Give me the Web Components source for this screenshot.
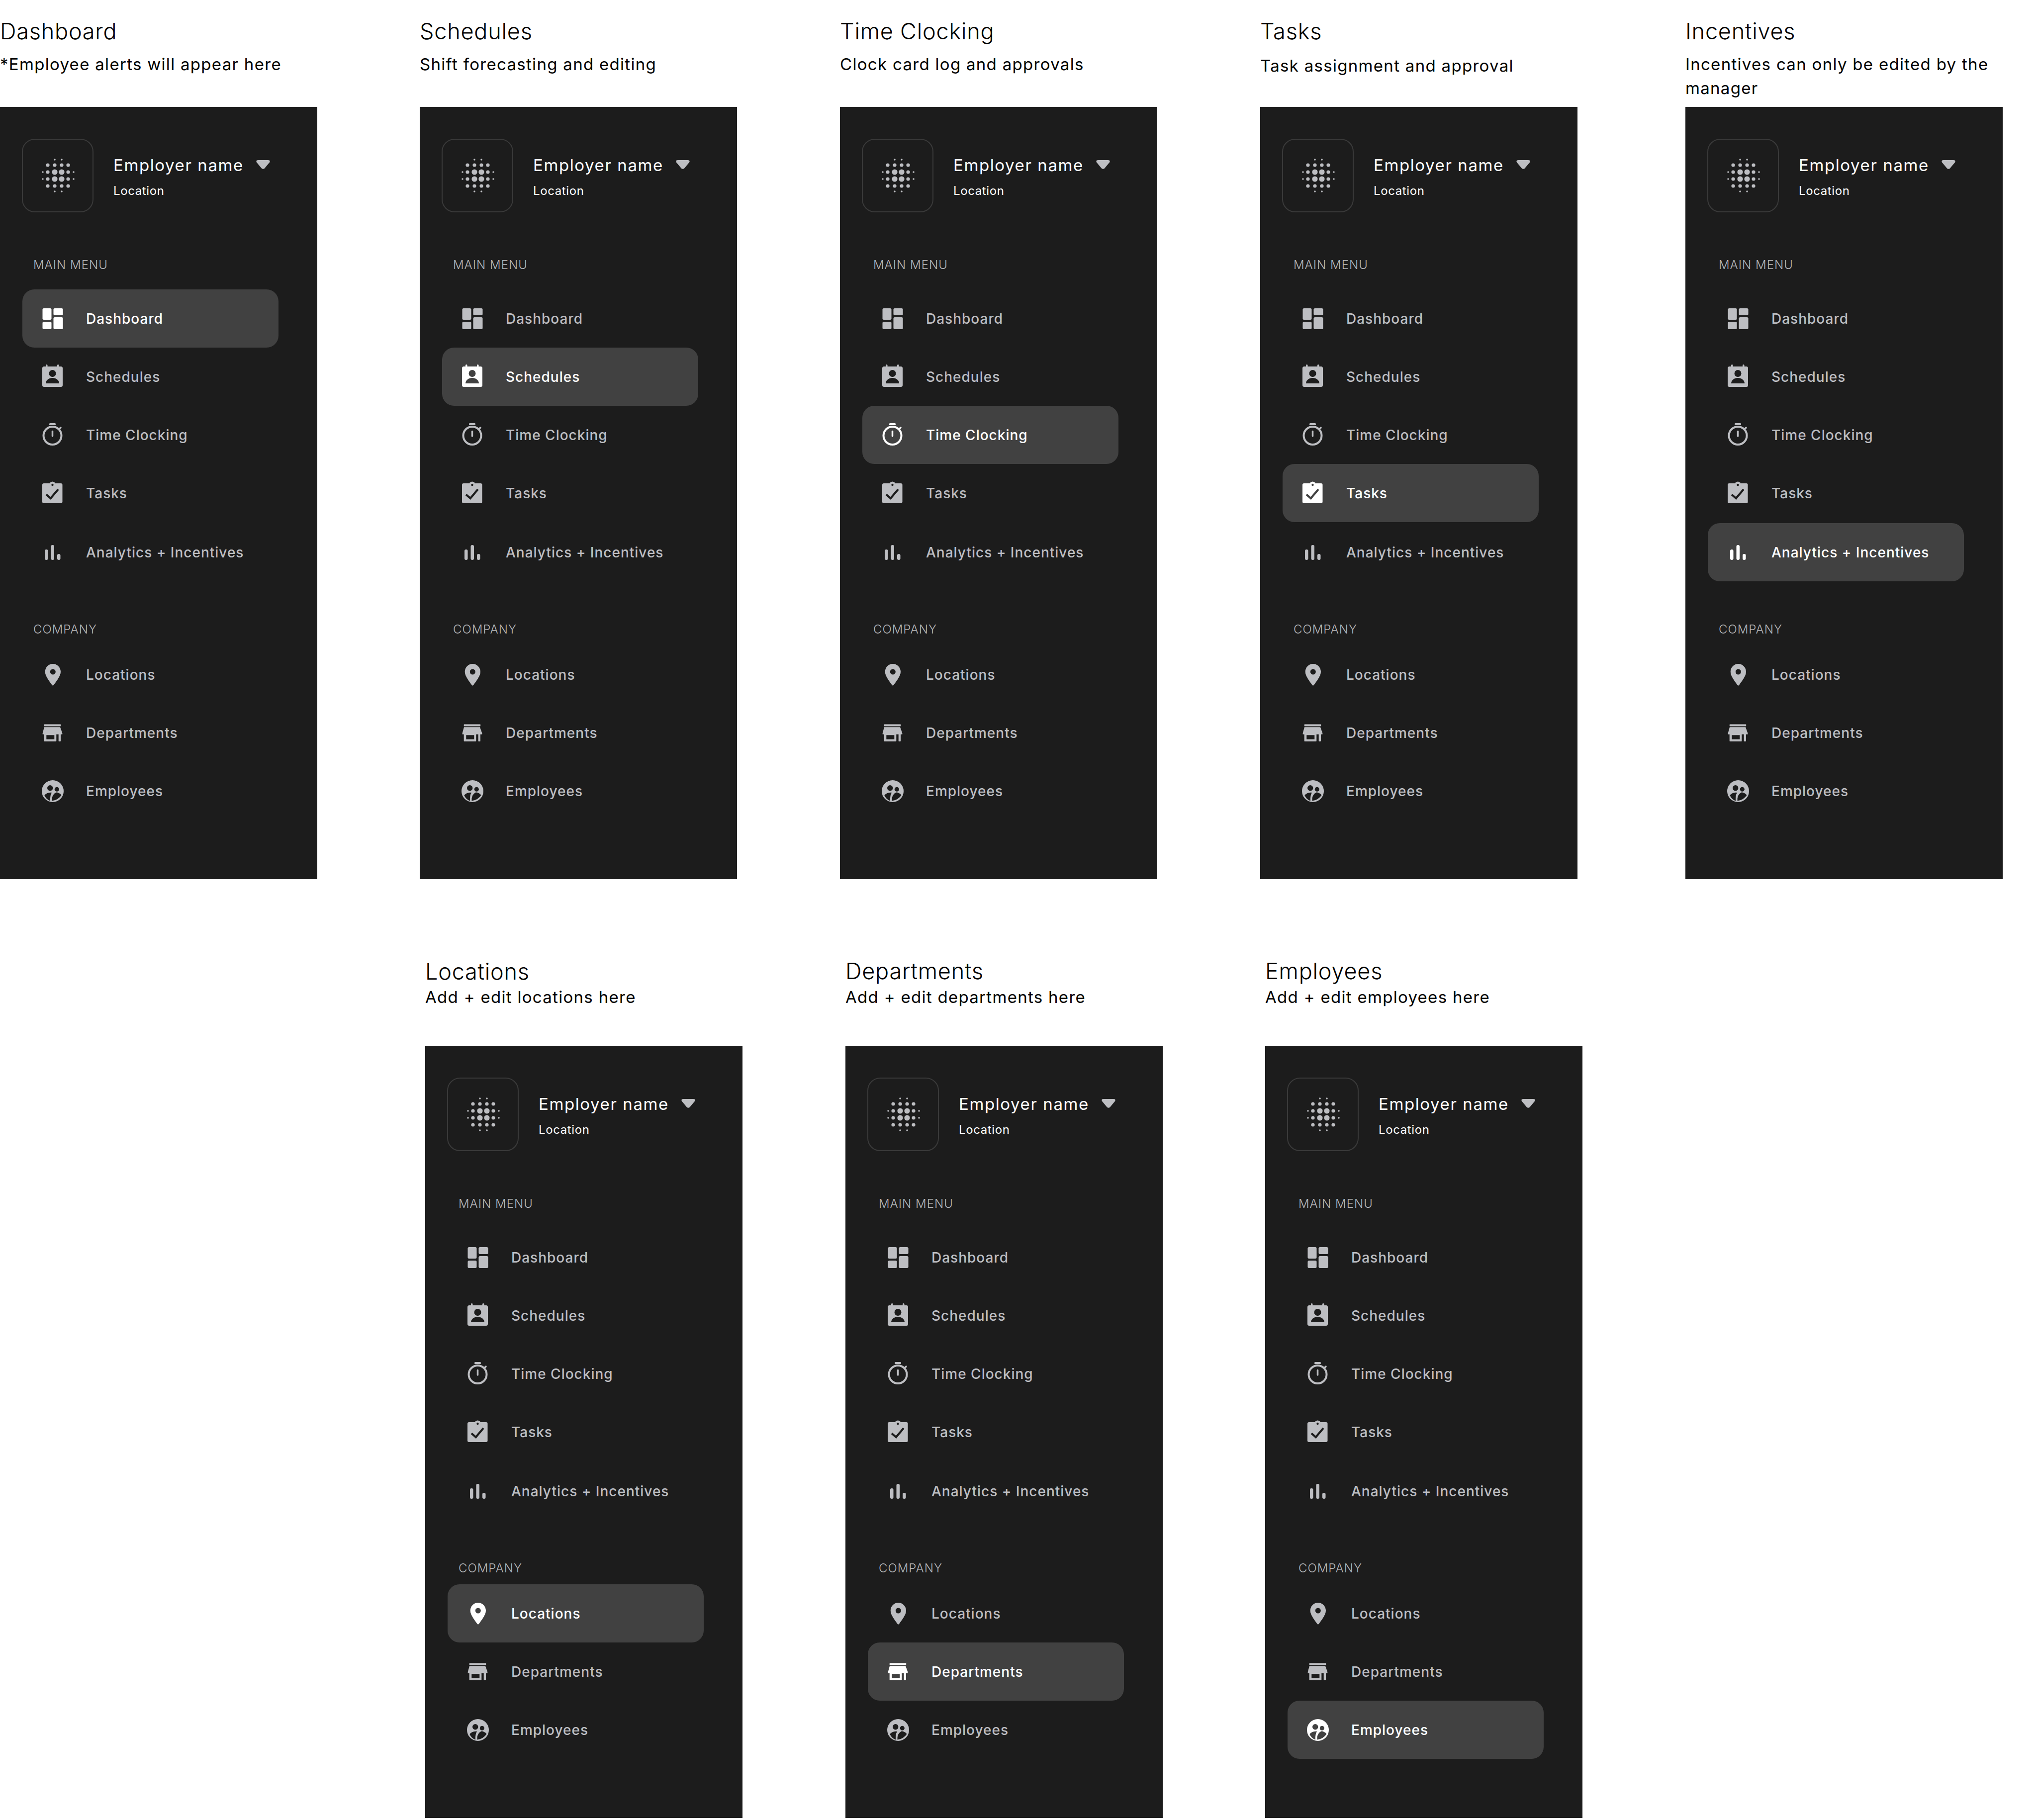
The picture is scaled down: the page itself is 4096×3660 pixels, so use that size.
<!DOCTYPE html>
<html>
<head>
<meta charset="utf-8">
<title>Employer menu states</title>
<style>
    html, body { margin: 0; background: #fff; }
    body { font-family: Inter, "Liberation Sans", sans-serif; }
</style>
</head>
<body>
<screen-row columns="844px 845px 845px 855px 638px">
    <menu-screen heading="Dashboard" note="*Employee alerts will appear here" active="Dashboard"></menu-screen>
    <menu-screen heading="Schedules" note="Shift forecasting and editing" active="Schedules"></menu-screen>
    <menu-screen heading="Time Clocking" note="Clock card log and approvals" active="Time Clocking"></menu-screen>
    <menu-screen heading="Tasks" note="Task assignment and approval" active="Tasks" style="--note-gap: 18px"></menu-screen>
    <menu-screen heading="Incentives" note="Incentives can only be edited by the manager" active="Analytics + Incentives"></menu-screen>
</screen-row>
<screen-row columns="845px 844px 638px" style="--row-gap: 120px; --row-indent: 855px; --title-top: 39px; --note-gap: 0px">
    <menu-screen heading="Locations" note="Add + edit locations here" active="Locations"></menu-screen>
    <menu-screen heading="Departments" note="Add + edit departments here" active="Departments" style="--title-top: 38px; --note-gap: 1px"></menu-screen>
    <menu-screen heading="Employees" note="Add + edit employees here" active="Employees" style="--title-top: 38px; --note-gap: 1px"></menu-screen>
</screen-row>

<script>
// All icons share a 48 box, holes are painted with --hole so they follow the row colour
const ICONS = {
    dashboard: `
        <rect x="3.5" y="3" width="18" height="23" rx="2.5"/>
        <rect x="3.5" y="30" width="18" height="15" rx="2.5"/>
        <rect x="25.5" y="3" width="19" height="14" rx="2.5"/>
        <rect x="25.5" y="21" width="19" height="24" rx="2.5"/>`,
    schedules: `
        <rect x="10" y="-1" width="3.5" height="8" rx="1.5"/>
        <rect x="33" y="-1" width="3.5" height="8" rx="1.5"/>
        <rect x="3" y="3" width="41" height="41" rx="3.5"/>
        <g fill="var(--hole)">
            <circle cx="23.5" cy="17" r="7"/>
            <path d="M10 37c0-6 6-11 13.5-11s13.5 5 13.5 11z"/>
        </g>`,
    clock: `
        <rect x="17" y="0" width="13" height="4" rx="1.5"/>
        <g fill="none" stroke="currentColor" stroke-linecap="round">
            <circle cx="23.5" cy="25" r="18" stroke-width="4"/>
            <path d="M23.5 16.5v9.5" stroke-width="3.5"/>
            <path d="M37 12l3-3" stroke-width="3.5"/>
        </g>`,
    tasks: `
        <rect x="3" y="4" width="40.500" height="40" rx="3"/>
        <circle cx="23.500" cy="6.500" r="6"/>
        <circle cx="23.500" cy="7" r="2.200" fill="var(--hole)"/>
        <path d="M11 26.500l8.800 7.500L35 16" fill="none" stroke="var(--hole)" stroke-width="4.200"/>`,
    analytics: `
        <rect x="8" y="18" width="6.500" height="21" rx="3"/>
        <rect x="20.500" y="9" width="6.500" height="30" rx="3"/>
        <rect x="33" y="27" width="6.500" height="12" rx="3"/>`,
    pin: `
        <path d="M24.300 2C15.500 2 8.700 9 8.700 18c0 9.500 10.500 21 13.800 26.500q1.800 2.300 3.600 0C29.400 39 40 27.500 40 18 40 9 33 2 24.300 2z"/>
        <circle cx="24.300" cy="18" r="5.500" fill="var(--hole)"/>`,
    store: `
        <rect x="6.700" y="6.500" width="33.500" height="4" rx="1"/>
        <path d="M7 12.300h32l4.300 12v2.500H3.700v-2.500z"/>
        <path d="M6.700 26h24.600v14a1 1 0 0 1-1 1H7.700a1 1 0 0 1-1-1z"/>
        <rect x="11.300" y="28.300" width="16" height="8.400" fill="var(--hole)"/>
        <path d="M35.700 26H40v14a1 1 0 0 1-1 1h-2.300a1 1 0 0 1-1-1z"/>`,
    people: `
        <circle cx="24" cy="24" r="22"/>
        <g fill="var(--hole)">
            <circle cx="18.700" cy="17.800" r="5.700"/>
            <circle cx="32.300" cy="20.200" r="4.500"/>
            <path d="M7.300 32.300Q12 27 19 26.700L22.300 27Q18.500 31 19 43.500 11 41 7.300 32.300z"/>
            <path d="M22.500 43.500Q21.500 31 30.700 26.500 37 26.500 41.500 32 35 42 22.500 43.500z"/>
        </g>`
};

class ScreenRow extends HTMLElement {
    constructor() {
        super();
        this.attachShadow({ mode: 'open' });
    }

    connectedCallback() {
        const columns = this.getAttribute('columns') || 'auto';
        this.shadowRoot.innerHTML = `
            <style>
                :host {
                    display: grid;
                    grid-template-columns: ${columns};
                    margin-top: var(--row-gap, 0);
                    padding-left: var(--row-indent, 0);
                }
            </style>
            <slot></slot>
        `;
    }
}

class MenuScreen extends HTMLElement {
    constructor() {
        super();
        this.attachShadow({ mode: 'open' });
    }

    connectedCallback() {
        const heading = this.getAttribute('heading') || '';
        const note = this.getAttribute('note') || '';
        const active = this.getAttribute('active') || '';

        this.shadowRoot.innerHTML = `
            <style>
                :host {
                    display: block;
                    width: 638px;
                    color: #000;
                }

                .head {
                    height: 215px;
                    box-sizing: border-box;
                    padding-top: var(--title-top, 36px);
                }

                .title {
                    font-size: 45px;
                    line-height: 54px;
                    font-weight: 300;
                    letter-spacing: 0.8px;
                }

                .note {
                    margin-top: var(--note-gap, 15px);
                    font-size: 33px;
                    line-height: 48px;
                    font-weight: 400;
                    letter-spacing: 1.3px;
                }
            </style>
            <div class="head">
                <div class="title">${heading}</div>
                <div class="note">${note}</div>
            </div>
            <side-menu active="${active}"></side-menu>
        `;
    }
}

class SideMenu extends HTMLElement {
    constructor() {
        super();
        this.attachShadow({ mode: 'open' });
    }

    connectedCallback() {
        const active = this.getAttribute('active');
        const item = (icon, label, cls) => `
            <nav-item class="${cls || ''}" icon="${icon}" label="${label}" ${label === active ? 'active' : ''}></nav-item>`;

        this.shadowRoot.innerHTML = `
            <style>
                :host {
                    display: block;
                    height: 1553px;
                    box-sizing: border-box;
                    padding: 64px 0 0 45px;
                    background: #1c1c1c;
                }

                .section {
                    margin: 91px 0 34px 22px;
                    height: 30px;
                    line-height: 30px;
                    font-size: 24px;
                    font-weight: 300;
                    letter-spacing: 1px;
                    color: #b4b5b8;
                }

                .section.company {
                    margin: 82px 0 17px 22px;
                }

                .analytics {
                    margin-top: 2px;
                }
            </style>
            <employer-card></employer-card>
            <div class="section">MAIN MENU</div>
            ${item('dashboard', 'Dashboard')}
            ${item('schedules', 'Schedules')}
            ${item('clock', 'Time Clocking')}
            ${item('tasks', 'Tasks')}
            ${item('analytics', 'Analytics + Incentives', 'analytics')}
            <div class="section company">COMPANY</div>
            ${item('pin', 'Locations')}
            ${item('store', 'Departments')}
            ${item('people', 'Employees')}
        `;
    }
}

class EmployerCard extends HTMLElement {
    constructor() {
        super();
        this.attachShadow({ mode: 'open' });
    }

    // Dot logo: six rows, dots get bigger toward the middle
    logoDots() {
        const xs = [-30, -20, -6, 8, 21, 32];
        const ys = [-32, -21, -7, 7, 21, 32];
        const radius = [
            [0, 0, 1.8, 1.8, 0, 0],
            [0, 3.600, 3.600, 3.600, 3.600, 0],
            [1.800, 3.600, 5.600, 5.600, 3.600, 1.800],
            [1.800, 3.600, 5.600, 5.600, 3.600, 1.800],
            [0, 3.600, 3.600, 3.600, 3.600, 0],
            [0, 0, 1.8, 1.8, 0, 0]
        ];
        let dots = '';
        ys.forEach((y, r) => xs.forEach((x, c) => {
            if (radius[r][c]) dots += `<circle cx="${x}" cy="${y}" r="${radius[r][c]}"/>`;
        }));
        return dots;
    }

    connectedCallback() {
        this.shadowRoot.innerHTML = `
            <style>
                :host {
                    display: flex;
                    height: 148px;
                    margin-left: -1px;
                    color: #fff;
                }

                .logo {
                    flex: none;
                    width: 144px;
                    height: 148px;
                    box-sizing: border-box;
                    border: 2px solid #3a3a3a;
                    border-radius: 26px;
                    display: flex;
                    align-items: center;
                    justify-content: center;
                }

                .logo svg {
                    width: 80px;
                    height: 80px;
                    fill: #bdbec2;
                }

                .text {
                    margin-left: 40px;
                    padding-top: 33px;
                }

                .name {
                    display: flex;
                    align-items: center;
                    height: 40px;
                    font-size: 33px;
                    line-height: 40px;
                    font-weight: 400;
                    letter-spacing: 1.6px;
                }

                .name svg {
                    width: 28px;
                    height: 18px;
                    margin: -2px 0 0 25px;
                    fill: #bdbec2;
                }

                .place {
                    margin-top: 17px;
                    font-size: 24px;
                    line-height: 30px;
                    font-weight: 400;
                    letter-spacing: 0.6px;
                }
            </style>
            <div class="logo">
                <svg viewBox="-40 -40 80 80">${this.logoDots()}</svg>
            </div>
            <div class="text">
                <div class="name">Employer name
                    <svg viewBox="0 0 28 18"><path d="M4 0h20q5 0 3 4.500l-10 12q-3 2.500-6 0L1 4.500Q-1 0 4 0z"/></svg>
                </div>
                <div class="place">Location</div>
            </div>
        `;
    }
}

class NavItem extends HTMLElement {
    constructor() {
        super();
        this.attachShadow({ mode: 'open' });
    }

    connectedCallback() {
        const icon = this.getAttribute('icon');
        const label = this.getAttribute('label') || '';

        this.shadowRoot.innerHTML = `
            <style>
                :host {
                    display: flex;
                    align-items: center;
                    width: 515px;
                    height: 117px;
                    box-sizing: border-box;
                    padding-left: 37px;
                    border-radius: 24px;
                    font-size: 28px;
                    font-weight: 500;
                    letter-spacing: 1px;
                    color: #bdbec2;
                    --hole: #1c1c1c;
                }

                :host([active]) {
                    background: #414141;
                    color: #fff;
                    --hole: #414141;
                }

                svg {
                    flex: none;
                    width: 48px;
                    height: 48px;
                    margin-right: 43px;
                    overflow: visible;
                    fill: currentColor;
                }
            </style>
            <svg viewBox="0 0 48 48">${ICONS[icon]}</svg>
            <span>${label}</span>
        `;
    }
}

customElements.define('screen-row', ScreenRow);
customElements.define('menu-screen', MenuScreen);
customElements.define('side-menu', SideMenu);
customElements.define('employer-card', EmployerCard);
customElements.define('nav-item', NavItem);
</script>
</body>
</html>
